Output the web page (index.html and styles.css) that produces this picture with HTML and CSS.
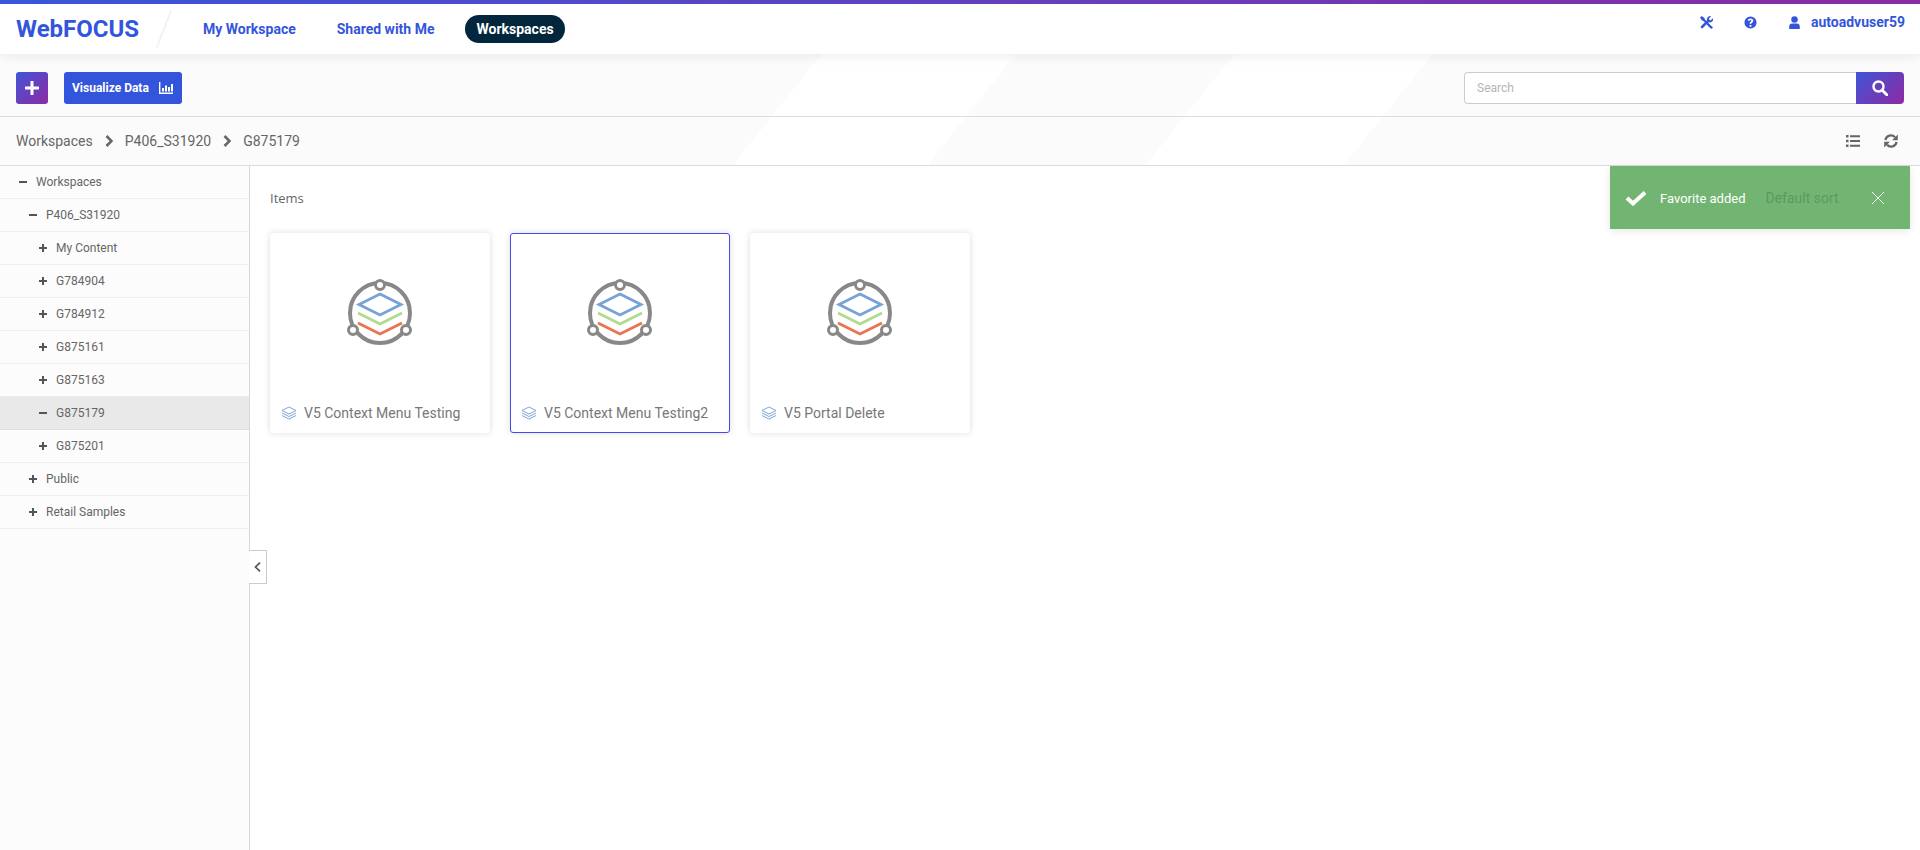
FILE: index.html
```html
<!DOCTYPE html>
<html lang="en">
<head>
    <meta charset="UTF-8">
    <title>WebFOCUS</title>
    <link rel="stylesheet" href="styles.css">
</head>
<body>
    <header class="topbar">
        <div class="brand">WebFOCUS</div>
        <div class="brand-slash"></div>
        <nav class="main-nav">
            <a href="#">My Workspace</a>
            <a href="#">Shared with Me</a>
            <a href="#" class="active">Workspaces</a>
        </nav>
        <div class="user-area">
            <svg class="top-icon" viewBox="0 0 16 16"><path d="M13.500 14 3.500 3.500" fill="none" stroke="#3355dc" stroke-width="2.600"/><path d="M0 2 2 0 5.500 2.500 5.500 5 4.500 6 2.500 5.500Z M10 9 16 14 14 16 8.500 10.500Z"/><path d="M2.500 13.500 10 6" fill="none" stroke="#3355dc" stroke-width="3.200" stroke-linecap="round"/><path d="M8.500 4.200A4 4 0 0 1 13.600.3L11 3 11.500 4.800 13.300 5.300 15.800 2.700A4 4 0 0 1 10.500 7.700Z"/></svg>
            <svg class="top-icon" viewBox="0 0 16 16"><path fill-rule="evenodd" d="M8 .5a7.500 7.500 0 1 0 0 15A7.500 7.500 0 0 0 8 .5ZM6.900 11h2.200v2.200H6.900Zm1.100-8c2.100 0 3.400 1.200 3.400 2.800 0 1.300-.8 1.900-1.500 2.400-.6.400-.8.700-.8 1.300H6.900c0-1.300.5-1.900 1.200-2.400.6-.4 1-.7 1-1.200 0-.6-.5-1-1.200-1-.8 0-1.300.4-1.500 1.200L4.500 5.400C4.900 3.900 6.200 3 8 3Z"/></svg>
            <span class="user-name">
                <svg class="top-icon" viewBox="0 0 16 16"><circle cx="8" cy="4.200" r="4"/><path d="M1.500 16v-3A3.800 3.800 0 0 1 5.300 9.200h5.400A3.800 3.800 0 0 1 14.500 13v3Z"/></svg>
                autoadvuser59
            </span>
        </div>
    </header>

    <div class="band">
        <div class="toolbar">
            <button class="btn-add">
                <svg viewBox="0 0 14 14"><path d="M5.500 0h3v5.500H14v3H8.500V14h-3V8.500H0v-3h5.500Z"/></svg>
            </button>
            <button class="btn-visualize">
                Visualize Data
                <svg viewBox="0 0 14 12"><path d="M0 0h1.400v10.600H14V12H0Z M3 6h2v3.500H3Z M6 3.500h2v6H6Z M9 5h2v4.500H9Z M12 2h2v7.500h-2Z"/></svg>
            </button>
            <div class="search">
                <input type="text" placeholder="Search">
                <button class="btn-search">
                    <svg viewBox="0 0 16 16"><circle cx="6.500" cy="6.500" r="5" fill="none" stroke="#fff" stroke-width="2.400"/><path d="M10 10 15 15" stroke="#fff" stroke-width="2.800" stroke-linecap="round"/></svg>
                </button>
            </div>
        </div>
        <div class="crumbs">
            <span>Workspaces</span>
            <svg class="crumb-sep" viewBox="0 0 8 12"><path d="M1.500 1 6.500 6 1.500 11" fill="none" stroke="#666" stroke-width="2.600"/></svg>
            <span>P406_S31920</span>
            <svg class="crumb-sep" viewBox="0 0 8 12"><path d="M1.500 1 6.500 6 1.500 11" fill="none" stroke="#666" stroke-width="2.600"/></svg>
            <span>G875179</span>
            <div class="crumb-tools">
                <svg viewBox="0 0 14 12"><path d="M0 0h2.500v2.400H0Z M4 .2h10v2H4Z M0 4.800h2.500v2.400H0Z M4 5h10v2H4Z M0 9.600h2.500V12H0Z M4 9.800h10v2H4Z"/></svg>
                <svg viewBox="0 0 14 14"><path d="M1.400 6A5.600 5.600 0 0 1 11 3.200M12.600 8A5.600 5.600 0 0 1 3 10.800" fill="none" stroke="#666" stroke-width="2.300"/><path d="M13.800.5V6.200H8.100Z M.2 13.500V7.800H5.900Z"/></svg>
            </div>
        </div>
    </div>

    <div class="content">
        <aside class="sidebar">
            <div class="tree-row lvl0"><span class="toggle minus"></span>Workspaces</div>
            <div class="tree-row lvl1"><span class="toggle minus"></span>P406_S31920</div>
            <div class="tree-row lvl2"><span class="toggle plus"></span>My Content</div>
            <div class="tree-row lvl2"><span class="toggle plus"></span>G784904</div>
            <div class="tree-row lvl2"><span class="toggle plus"></span>G784912</div>
            <div class="tree-row lvl2"><span class="toggle plus"></span>G875161</div>
            <div class="tree-row lvl2"><span class="toggle plus"></span>G875163</div>
            <div class="tree-row lvl2 selected"><span class="toggle minus"></span>G875179</div>
            <div class="tree-row lvl2"><span class="toggle plus"></span>G875201</div>
            <div class="tree-row lvl1"><span class="toggle plus"></span>Public</div>
            <div class="tree-row lvl1"><span class="toggle plus"></span>Retail Samples</div>
            <div class="collapse-tab">
                <svg viewBox="0 0 7 10"><path d="M6 .7 1.500 5 6 9.300" fill="none" stroke="#555" stroke-width="1.700"/></svg>
            </div>
        </aside>
        <main class="items">
            <h2 class="items-title">Items</h2>
            <div class="cards">
                <div class="card">
                    <div class="card-pic">
                        <svg viewBox="0 0 66 68"><use href="#portal"/></svg>
                    </div>
                    <div class="card-label">
                        <svg viewBox="0 0 16 15"><use href="#layers"/></svg>
                        V5 Context Menu Testing
                    </div>
                </div>
                <div class="card current">
                    <div class="card-pic">
                        <svg viewBox="0 0 66 68"><use href="#portal"/></svg>
                    </div>
                    <div class="card-label">
                        <svg viewBox="0 0 16 15"><use href="#layers"/></svg>
                        V5 Context Menu Testing2
                    </div>
                </div>
                <div class="card">
                    <div class="card-pic">
                        <svg viewBox="0 0 66 68"><use href="#portal"/></svg>
                    </div>
                    <div class="card-label">
                        <svg viewBox="0 0 16 15"><use href="#layers"/></svg>
                        V5 Portal Delete
                    </div>
                </div>
            </div>
        </main>
    </div>

    <div class="toast">
        <svg class="toast-check" viewBox="0 0 22 16"><path d="M2 8 8 13.500 20 2.500" fill="none" stroke="#fff" stroke-width="4"/></svg>
        <span class="toast-msg">Favorite added</span>
        <span class="toast-sort">Default sort</span>
        <svg class="toast-close" viewBox="0 0 14 14"><path d="M1 1 13 13M13 1 1 13" fill="none" stroke="#fff" stroke-width="1"/></svg>
    </div>

    <svg class="defs">
        <symbol id="portal" viewBox="0 0 66 68">
            <circle cx="33" cy="34" r="30" fill="none" stroke="#888" stroke-width="4"/>
            <circle cx="33" cy="6" r="4.500" fill="#fff" stroke="#888" stroke-width="3"/>
            <circle cx="6" cy="51" r="4.500" fill="#fff" stroke="#888" stroke-width="3"/>
            <circle cx="59" cy="51" r="4.500" fill="#fff" stroke="#888" stroke-width="3"/>
            <path d="M33 15 54 25.500 33 36 12 25.500Z" fill="none" stroke="#74a3d4" stroke-width="2.800"/>
            <path d="M11 34 33 45 55 34" fill="none" stroke="#aedb8e" stroke-width="2.800"/>
            <path d="M11 44 33 55 55 44" fill="none" stroke="#ea7350" stroke-width="2.800"/>
        </symbol>
        <symbol id="layers" viewBox="0 0 16 15">
            <path d="M8 1 15 4.500 8 8 1 4.500Z M1 7 8 10.500 15 7 M1 9.500 8 13 15 9.500" fill="none" stroke="#7ba8d8" stroke-width="1"/>
        </symbol>
    </svg>
</body>
</html>
```
FILE: styles.css
```css
* {
    box-sizing: border-box;
}

html, body {
    height: 100%;
}

body {
    margin: 0;
    background-color: #fff;
    font-family: Roboto, "Liberation Sans", sans-serif;
    color: #666;
    overflow: hidden;
}

.topbar {
    height: 54px;
    display: flex;
    align-items: center;
    padding: 0 15px 0 16px;
    background-color: #fff;
    border-top: 4px solid transparent;
    border-image: linear-gradient(90deg, #3956db, #8a2ba3) 1;
    position: relative;
    box-shadow: 0 2px 12px rgba(0, 0, 0, 0.08);
    z-index: 2;
}

.brand {
    font-size: 24px;
    font-weight: 700;
    color: #3355dc;
    width: 147px;
}

.brand-slash {
    width: 2px;
    height: 38px;
    background-color: #f2f2f2;
    transform: skewX(-21deg);
}

.main-nav {
    display: flex;
    align-items: center;
    margin-left: 27px;
    gap: 19px;
}

.main-nav a {
    font-size: 14px;
    font-weight: 700;
    color: #3355dc;
    text-decoration: none;
    padding: 6px 11px;
    height: 28px;
    line-height: 16px;
    border-radius: 14px;
}

.main-nav a.active {
    margin-left: 1px;
    background-color: #02263c;
    color: #fff;
}

.user-area {
    margin-left: auto;
    display: flex;
    align-items: center;
    gap: 31px;
    margin-top: -14px;
    color: #3355dc;
    font-size: 14px;
    font-weight: 700;
}

.top-icon {
    width: 13px;
    height: 13px;
    fill: #3355dc;
}

.user-name {
    display: flex;
    align-items: center;
    gap: 10px;
}

.band {
    height: 112px;
    background-color: #fbfbfb;
    background-image: linear-gradient(128.5deg, transparent 643px, #fff 643px, #fff 795px, transparent 795px, transparent 966px, #fff 966px, #fff 1121px, transparent 1121px);
    border-bottom: 1px solid #ddd;
}

.toolbar {
    height: 63px;
    display: flex;
    align-items: center;
    padding: 6px 16px 0;
    border-bottom: 1px solid #ddd;
}

.btn-add {
    width: 32px;
    height: 32px;
    border: none;
    border-radius: 3px;
    background: linear-gradient(135deg, #3f55d6, #8e2aa3);
    display: flex;
    align-items: center;
    justify-content: center;
    padding: 0;
}

.btn-add svg {
    width: 14px;
    height: 14px;
    fill: #fff;
}

.btn-visualize {
    margin-left: 16px;
    width: 118px;
    height: 32px;
    border: none;
    border-radius: 3px;
    background-color: #3355dc;
    color: #fff;
    font-family: inherit;
    font-size: 12px;
    font-weight: 700;
    display: flex;
    align-items: center;
    gap: 10px;
    padding: 0 8px;
}

.btn-visualize svg {
    width: 14px;
    height: 12px;
    fill: #fff;
}

.search {
    margin-left: auto;
    display: flex;
}

.search input {
    width: 392px;
    height: 32px;
    border: 1px solid #ccc;
    border-right: none;
    border-radius: 4px 0 0 4px;
    padding: 0 12px;
    font-family: inherit;
    font-size: 12px;
    background-color: #fff;
}

.search input::placeholder {
    color: #b5b5b5;
}

.btn-search {
    width: 48px;
    height: 32px;
    border: none;
    border-radius: 0 4px 4px 0;
    background: linear-gradient(135deg, #3f55d6, #8e2aa3);
    display: flex;
    align-items: center;
    justify-content: center;
    padding: 0;
}

.btn-search svg {
    width: 16px;
    height: 16px;
}

.crumbs {
    height: 48px;
    display: flex;
    align-items: center;
    padding: 0 16px;
    font-size: 14px;
    color: #666;
    gap: 12px;
}

.crumb-sep {
    width: 8px;
    height: 12px;
}

.crumb-tools {
    margin-left: auto;
    display: flex;
    align-items: center;
    gap: 24px;
    margin-right: 6px;
}

.crumb-tools svg {
    width: 14px;
    height: 14px;
    fill: #666;
}

.content {
    display: flex;
    height: 684px;
}

.sidebar {
    width: 250px;
    background-color: #fcfcfc;
    border-right: 1px solid #d8d8d8;
    position: relative;
}

.tree-row {
    height: 33px;
    display: flex;
    align-items: center;
    font-size: 12px;
    color: #666;
    border-bottom: 1px solid #eee;
    gap: 9px;
}

.tree-row.selected {
    background-color: #e9e9e9;
    border-bottom-color: #ddd;
}

.lvl0 { padding-left: 19px; }
.lvl1 { padding-left: 29px; }
.lvl2 { padding-left: 39px; }

.toggle {
    width: 8px;
    height: 8px;
    position: relative;
    display: block;
}

.toggle::before {
    content: "";
    position: absolute;
    left: 0;
    top: 3px;
    width: 8px;
    height: 2px;
    background-color: #555;
}

.toggle.plus::after {
    content: "";
    position: absolute;
    left: 3px;
    top: 0;
    width: 2px;
    height: 8px;
    background-color: #555;
}

.collapse-tab {
    position: absolute;
    left: 249px;
    top: 384px;
    width: 18px;
    height: 34px;
    background-color: #fff;
    border: 1px solid #ccc;
    border-left: none;
    display: flex;
    align-items: center;
    justify-content: center;
}

.collapse-tab svg {
    width: 7px;
    height: 10px;
}

.items {
    flex: 1;
    padding: 23px 20px;
}

.items-title {
    margin: 0;
    font-family: "Open Sans", sans-serif;
    font-size: 13px;
    font-weight: 400;
    line-height: 18px;
    color: #666;
}

.cards {
    display: flex;
    gap: 20px;
    margin-top: 26px;
}

.card {
    width: 220px;
    height: 200px;
    background-color: #fff;
    border: 1px solid #fff;
    border-radius: 3px;
    box-shadow: 0 0 6px rgba(0, 0, 0, 0.14);
    display: flex;
    flex-direction: column;
}

.card.current {
    border-color: #4848f0;
}

.card-pic {
    flex: 1;
    display: flex;
    justify-content: center;
    padding-top: 45px;
}

.card-pic svg {
    width: 66px;
    height: 68px;
}

.card-label {
    height: 38px;
    display: flex;
    align-items: center;
    padding: 0 10px;
    gap: 7px;
    font-size: 14px;
    color: #777;
}

.card-label svg {
    width: 16px;
    height: 15px;
}

.toast {
    position: absolute;
    left: 1610px;
    top: 166px;
    width: 300px;
    height: 63px;
    background-color: #72b573;
    box-shadow: 0 2px 8px rgba(0, 0, 0, 0.1);
    display: flex;
    align-items: center;
    padding: 1px 0 0 15px;
    font-size: 13px;
    color: #fff;
}

.toast-check {
    width: 22px;
    height: 16px;
}

.toast-msg {
    margin-left: 13px;
}

.toast-sort {
    margin-left: 20px;
    font-size: 14px;
    color: #5a9a5e;
}

.toast-close {
    width: 14px;
    height: 14px;
    margin-left: 32px;
}

.defs {
    display: none;
}
```
